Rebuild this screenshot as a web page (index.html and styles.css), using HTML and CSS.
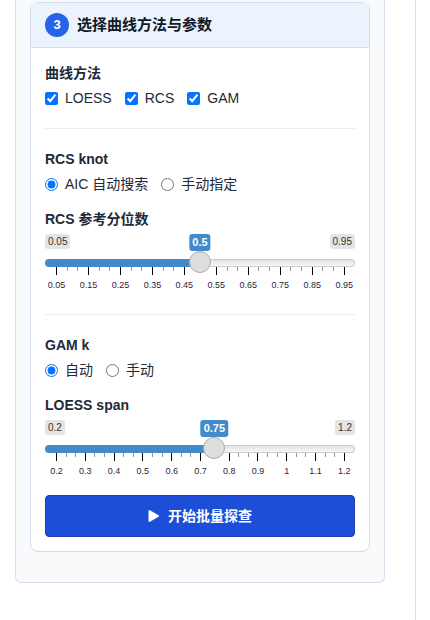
FILE: index.html
```html
<!DOCTYPE html>
<html lang="zh-CN">
<head>
  <meta charset="UTF-8">
  <meta name="viewport" content="width=device-width, initial-scale=1.0">
  <title>选择曲线方法与参数</title>
  <link rel="stylesheet" href="styles.css">
</head>
<body>
  <aside class="sidebar">
    <form class="well">
      <section class="card">
        <header class="card-header">
          <span class="step">3</span>
          <h2>选择曲线方法与参数</h2>
        </header>
        <div class="card-body">
          <fieldset>
            <legend>曲线方法</legend>
            <div class="options">
              <label><input type="checkbox" name="method" value="loess" checked>LOESS</label>
              <label><input type="checkbox" name="method" value="rcs" checked>RCS</label>
              <label><input type="checkbox" name="method" value="gam" checked>GAM</label>
            </div>
          </fieldset>

          <hr>

          <fieldset>
            <legend>RCS knot</legend>
            <div class="options">
              <label><input type="radio" name="knot" value="aic" checked>AIC 自动搜索</label>
              <label><input type="radio" name="knot" value="manual">手动指定</label>
            </div>
          </fieldset>
          <div class="field">
            <label class="field-label" for="rcs-ref">RCS 参考分位数</label>
            <div class="slider" style="--pos: 0.5">
              <div class="slider-labels">
                <span class="limit">0.05</span>
                <output class="value" for="rcs-ref">0.5</output>
                <span class="limit">0.95</span>
              </div>
              <input type="range" id="rcs-ref" min="0.05" max="0.95" step="0.01" value="0.5">
              <ul class="ticks">
                <li class="major">0.05</li><li></li><li></li>
                <li class="major">0.15</li><li></li><li></li>
                <li class="major">0.25</li><li></li><li></li>
                <li class="major">0.35</li><li></li><li></li>
                <li class="major">0.45</li><li></li><li></li>
                <li class="major">0.55</li><li></li><li></li>
                <li class="major">0.65</li><li></li><li></li>
                <li class="major">0.75</li><li></li><li></li>
                <li class="major">0.85</li><li></li><li></li>
                <li class="major">0.95</li>
              </ul>
            </div>
          </div>

          <hr>

          <fieldset>
            <legend>GAM k</legend>
            <div class="options">
              <label><input type="radio" name="gam-k" value="auto" checked>自动</label>
              <label><input type="radio" name="gam-k" value="manual">手动</label>
            </div>
          </fieldset>
          <div class="field">
            <label class="field-label" for="loess-span">LOESS span</label>
            <div class="slider" style="--pos: 0.55">
              <div class="slider-labels">
                <span class="limit">0.2</span>
                <output class="value" for="loess-span">0.75</output>
                <span class="limit">1.2</span>
              </div>
              <input type="range" id="loess-span" min="0.2" max="1.2" step="0.05" value="0.75">
              <ul class="ticks">
                <li class="major">0.2</li><li></li><li></li>
                <li class="major">0.3</li><li></li><li></li>
                <li class="major">0.4</li><li></li><li></li>
                <li class="major">0.5</li><li></li><li></li>
                <li class="major">0.6</li><li></li><li></li>
                <li class="major">0.7</li><li></li><li></li>
                <li class="major">0.8</li><li></li><li></li>
                <li class="major">0.9</li><li></li><li></li>
                <li class="major">1</li><li></li><li></li>
                <li class="major">1.1</li><li></li><li></li>
                <li class="major">1.2</li>
              </ul>
            </div>
          </div>

          <button class="run" type="button">
            <svg width="12" height="14" viewBox="0 0 12 14" aria-hidden="true">
              <path d="M1.5 2v10L10 7z" fill="#fff" stroke="#fff" stroke-width="2" stroke-linejoin="round"/>
            </svg>
            开始批量探查
          </button>
        </div>
      </section>
    </form>
  </aside>
</body>
</html>
```

FILE: styles.css
```css
* {
  box-sizing: border-box;
}
body {
  margin: 0;
  background: #fff;
  color: #1f2937;
  font-family: "Liberation Sans", "Noto Sans CJK SC", sans-serif;
  font-size: 14px;
  line-height: 20px;
}
.sidebar {
  min-height: 100vh;
  margin-right: 14px;
  padding: 0 30px 0 15px;
  border-right: 1px solid #d8dee9;
}
.well {
  padding: 2px 14px 30px;
  background: #f8fafc;
  border: 1px solid #d5deea;
  border-top: 0;
  border-radius: 0 0 6px 6px;
}
.card {
  background: #fff;
  border: 1px solid #d5deea;
  border-radius: 8px;
}
.card-header {
  display: flex;
  align-items: center;
  gap: 8px;
  padding: 10px 14px;
  background: #ebf3fc;
  border-bottom: 1px solid #d5deea;
  border-radius: 4px 4px 0 0;
}
.card-header h2 {
  margin: 0;
  color: #111827;
  font-size: 15px;
  line-height: 24px;
}
.step {
  width: 24px;
  height: 24px;
  border-radius: 50%;
  background: #2563eb;
  color: #fff;
  font-size: 13px;
  font-weight: bold;
  line-height: 24px;
  text-align: center;
}
.card-body {
  padding: 15px 14px 14px;
}
fieldset {
  min-width: 0;
  margin: 0;
  padding: 0;
  border: 0;
}
legend,
.field-label {
  display: block;
  height: 20px;
  margin-bottom: 5px;
  padding: 0;
  font-weight: bold;
}
hr {
  height: 1px;
  margin: 20px 0;
  border: 0;
  background: #ebedf0;
}
.options {
  display: flex;
  flex-wrap: wrap;
  gap: 13px;
}
.options label {
  display: flex;
  align-items: center;
  gap: 7px;
  height: 20px;
}
.options input {
  width: 13px;
  height: 13px;
  margin: 0;
}
.field {
  margin-top: 15px;
}

/* slider */
.slider {
  padding-bottom: 4px;
}
.slider-labels {
  position: relative;
  display: flex;
  justify-content: space-between;
  align-items: flex-start;
  height: 17px;
}
.limit {
  padding: 0 3px;
  border-radius: 3px;
  background: #e4e4e4;
  color: #333;
  font-size: 10px;
  line-height: 15px;
}
.value {
  position: absolute;
  left: calc(11px + (100% - 22px) * var(--pos));
  transform: translateX(-50%);
  padding: 0 3px;
  border-radius: 3px;
  background: #428bca;
  color: #fff;
  font-size: 11px;
  font-weight: bold;
  line-height: 17px;
}
.slider input {
  position: relative;
  display: block;
  width: 100%;
  height: 24px;
  margin: 0;
  background: none;
  -webkit-appearance: none;
  appearance: none;
}
.slider input::-webkit-slider-runnable-track {
  height: 8px;
  border: 1px solid transparent;
  border-radius: 8px;
  background:
    linear-gradient(#428bca, #428bca) 0 0 / calc(11px + (100% - 22px) * var(--pos)) 100% no-repeat border-box,
    linear-gradient(#e1e1e1, #f8f8f8) padding-box,
    linear-gradient(#ccc, #ccc) border-box;
}
.slider input::-webkit-slider-thumb {
  -webkit-appearance: none;
  width: 22px;
  height: 22px;
  margin-top: -9px;
  border: 1px solid #ababab;
  border-radius: 50%;
  background: #dedede;
  box-shadow: 1px 1px 3px rgba(255, 255, 255, 0.3);
}
.ticks {
  display: flex;
  justify-content: space-between;
  height: 23px;
  margin: -8px 0 0;
  padding: 0 10px 0 11px;
  list-style: none;
}
.ticks li {
  display: flex;
  flex-direction: column;
  align-items: center;
  width: 1px;
  font-size: 9px;
  line-height: 10px;
}
.ticks li::before {
  content: "";
  flex: none;
  width: 1px;
  height: 4px;
  background: #999;
}
.ticks .major::before {
  height: 8px;
  margin-bottom: 5px;
  background: #000;
}

.run {
  display: flex;
  justify-content: center;
  align-items: center;
  gap: 8px;
  width: 100%;
  height: 42px;
  margin-top: 15px;
  border: 1px solid #1e40af;
  border-radius: 4px;
  background: #1d4ed8;
  color: #fff;
  font: inherit;
  font-weight: bold;
  cursor: pointer;
}
```
